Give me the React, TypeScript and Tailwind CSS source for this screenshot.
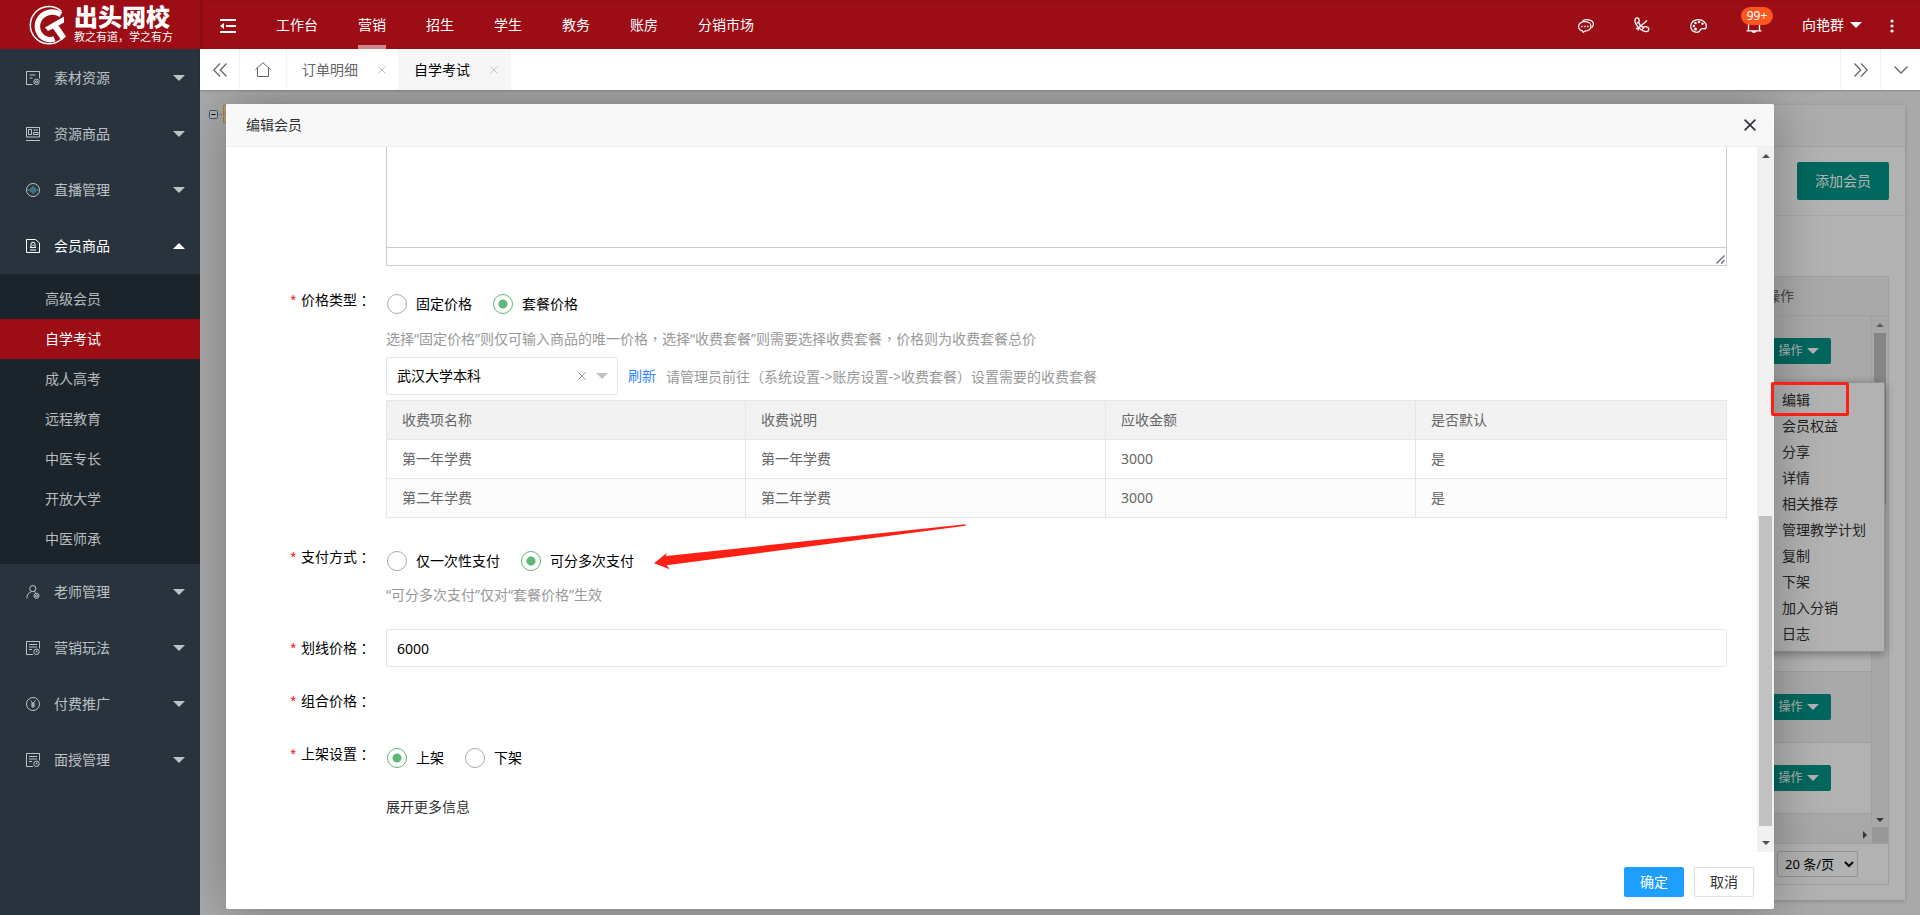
import type { ReactNode } from "react";

const SIDE_TOP = [
  { label: "素材资源", icon: "doc" },
  { label: "资源商品", icon: "goods" },
  { label: "直播管理", icon: "live" },
];
const SUB_ITEMS = ["高级会员", "自学考试", "成人高考", "远程教育", "中医专长", "开放大学", "中医师承"];
const SIDE_BOTTOM = [
  { label: "老师管理", icon: "teacher" },
  { label: "营销玩法", icon: "promo" },
  { label: "付费推广", icon: "yen" },
  { label: "面授管理", icon: "promo" },
];
const NAV = ["工作台", "营销", "招生", "学生", "教务", "账房", "分销市场"];
const MENU = ["编辑", "会员权益", "分享", "详情", "相关推荐", "管理教学计划", "复制", "下架", "加入分销", "日志"];
const ROWS = [true, false, false, false, false, true, true, false];
const FEES = [
  ["第一年学费", "第一年学费", "3000", "是"],
  ["第二年学费", "第二年学费", "3000", "是"],
];

function SideIcon({ name }: { name: string }) {
  return (
    <svg viewBox="0 0 14 14" className="size-[14px] shrink-0" fill="none" stroke="currentColor" strokeWidth="1">
      {name === "doc" && (
        <>
          <path d="M6.5 13.5H.5V.5h13v7M3.5 4h6M3.5 7h3" />
          <circle cx="10.5" cy="10.8" r="2.7" />
          <circle cx="10.5" cy="10.8" r="1" />
        </>
      )}
      {name === "goods" && <path d="M.5.5h13v9.5H.5zM0 13.5h14M2.5 2.5h3v5h-3zM7.5 3H12M7.5 5.5H12v2H7.5z" />}
      {name === "live" && (
        <>
          <circle cx="7" cy="7" r="6.5" />
          <path d="M3 6v2M5 4.5v5M7 3v8M9 4.5v5M11 6v2" stroke="#4fb3c4" />
        </>
      )}
      {name === "member" && (
        <path d="M.5.5h9l4 3.5v9.5H.5zM5 8.5V5.2a2 2 0 0 1 4 0v3.3M4 8.5h6M4 11h6M7 5.5v1.5" />
      )}
      {name === "teacher" && (
        <>
          <circle cx="6.8" cy="3.6" r="3.1" />
          <path d="M.8 13.5c0-3.6 1.7-5.8 4.4-6.6M8.3 6.5l1.4 1" />
          <circle cx="10.5" cy="10.8" r="2.5" />
          <circle cx="10.5" cy="10.8" r="1" />
        </>
      )}
      {name === "promo" && (
        <>
          <path d="M7 13.5H.5V.5h13v7M3 3.5h8M3 6h8M3 8.5h3" />
          <circle cx="10.5" cy="10.8" r="2.7" />
          <path d="M10.5 9.5v1.5h1" />
        </>
      )}
      {name === "yen" && (
        <>
          <circle cx="7" cy="7" r="6.5" />
          <path d="M4.5 3.5 7 6.5l2.5-3M7 6.5V11M4.8 7h4.4M4.8 9h4.4" />
        </>
      )}
    </svg>
  );
}

function Caret({ up = false, className = "" }: { up?: boolean; className?: string }) {
  return (
    <svg viewBox="0 0 12 6" className={`h-[6px] w-3 shrink-0 ${className}`} fill="currentColor">
      <path d={up ? "M0 6h12L6 0z" : "M0 0h12L6 6z"} />
    </svg>
  );
}

/* Full-width punctuation, drawn centred in its em box. */
function P({ children }: { children: ReactNode }) {
  return <span className="font-['Noto_Sans_CJK_TC',sans-serif]">{children}</span>;
}

function Sidebar() {
  const item = "flex h-14 items-center px-[26px] pr-[15px] text-white/70";
  return (
    <aside className="flex w-[200px] shrink-0 flex-col bg-[#28333e]">
      <div className="flex h-[49px] items-center bg-[#9c0d15] pl-7 text-white">
        <svg viewBox="0 0 40 40" className="size-10 shrink-0" fill="none" stroke="#fff">
          <path d="M33.5 6.2A18.7 18.7 0 1 0 33 34.5" strokeWidth="1.5" />
          <path d="M33 9.5C26 5.5 17.5 6.5 12.5 12.5 7 19.5 9 30 17 33.5c3.5 1.5 7 1.3 9.5.3" strokeWidth="5.5" />
          <path d="M17 22.500 36 11.500v6l-5.500 3L38 31.500l-4.500 4-8.500-12-5 2.500z" fill="#fff" stroke="none" />
        </svg>
        <div className="ml-[6px] font-['Liberation_Sans','Noto_Sans_CJK_SC',sans-serif]">
          <div className="text-2xl leading-[26px] font-black whitespace-nowrap">出头网校</div>
          <div className="text-[11px] leading-[13px] whitespace-nowrap">教之有道，学之有方</div>
        </div>
      </div>
      <nav className="pt-px">
        {SIDE_TOP.map((s) => (
          <a key={s.label} href="#" className={item}>
            <SideIcon name={s.icon} />
            <span className="ml-[14px] flex-1">{s.label}</span>
            <Caret />
          </a>
        ))}
        <a href="#" className="flex h-14 items-center px-[26px] pr-[15px] text-white">
          <SideIcon name="member" />
          <span className="ml-[14px] flex-1">会员商品</span>
          <Caret up />
        </a>
        <div className="rounded-xs bg-[#1c242b] py-[5px]">
          {SUB_ITEMS.map((s, i) => (
            <a
              key={s}
              href="#"
              className={`flex h-10 items-center pl-[45px] ${i === 1 ? "bg-[#9c0d15] text-white" : "text-white/70"}`}
            >
              {s}
            </a>
          ))}
        </div>
        {SIDE_BOTTOM.map((s) => (
          <a key={s.label} href="#" className={item}>
            <SideIcon name={s.icon} />
            <span className="ml-[14px] flex-1">{s.label}</span>
            <Caret />
          </a>
        ))}
      </nav>
    </aside>
  );
}

function TopBar() {
  return (
    <header className="flex h-[49px] shrink-0 items-center bg-[#9c0d15] text-white shadow-[inset_2px_0_2px_rgba(0,0,0,0.15)]">
      <button aria-label="菜单" className="ml-5">
        <svg viewBox="0 0 16 14" className="mt-[3px] h-[14px] w-4" stroke="#fff" fill="none" strokeWidth="2">
          <path d="M0 1h16M6 7h10M0 13h16" />
          <path d="M0 7l4-3v6z" fill="#fff" stroke="none" />
        </svg>
      </button>
      <nav className="ml-10 flex h-full gap-10">
        {NAV.map((n, i) => (
          <a
            key={n}
            href="#"
            className={`flex h-full items-center border-y-4 border-t-transparent ${i === 1 ? "border-b-white/50" : "border-b-transparent"}`}
          >
            {n}
          </a>
        ))}
      </nav>
      <div className="ml-auto flex h-full items-center">
        <button aria-label="消息" className="mr-10">
          <svg viewBox="0 0 16 14" className="mt-[3px] h-[14px] w-4" stroke="#fff" fill="none" strokeWidth="1.2">
            <path d="M6.8 2.7c3.5 0 6.2 2 6.2 4.7s-2.7 4.7-6.2 4.7l-1.5 1.3-1-1.5C2 11.1.6 9.5.6 7.4c0-2.7 2.7-4.7 6.2-4.7z" />
            <path d="M4.5 1.9C6 .8 8.5.3 11 .8c3 .6 4.6 2.6 4.3 4.9-.1 1.2-.8 2.2-1.8 3" />
            <path d="M3.3 7.500h1.400M6.200 7.500h1.400M9.100 7.500h1.400" strokeWidth="1.7" />
          </svg>
        </button>
        <button aria-label="电话" className="mr-10">
          <svg viewBox="0 0 16 16" className="size-4" stroke="#fff" fill="none" strokeWidth="1.3">
            <path d="M1 2.5C1.5.8 3.5.3 4.5 1.5c1 1.3 1 2.7 0 3.8.8 2.4 2.5 4.2 5 5.2 1.3-1.2 3.5-1 4.8.3.9 1 .6 2.6-.5 3.3-2 1-4.5.4-7.3-1.8C3.5 9.8.4 6 1 2.5z" />
            <path d="M13 3.5 4.5 11M2 11.5l2.5-.5-.5 2.5" />
            <path d="M4.5 5.3 2.5 6.5M9.5 10.5l-1.3 2" />
          </svg>
        </button>
        <button aria-label="主题" className="mr-[39px]">
          <svg viewBox="0 0 17 14" className="mt-[3px] h-[14px] w-[17px]" stroke="#fff" fill="none" strokeWidth="1.3">
            <path d="M8.5.7c4.5 0 7.8 3 7.8 6.5 0 1.8-.8 2.8-2 2.6-2-.4-3.5-.4-4 1-.5 1.6-1.6 2.5-3.3 2.5-3.5 0-6.3-2.4-6.3-6C.7 3.5 4 .7 8.5.7z" />
            <g fill="#fff" stroke="none">
              <circle cx="3.9" cy="7" r="1.2" />
              <circle cx="5.5" cy="4" r="1.2" />
              <circle cx="9" cy="3" r="1.2" />
              <circle cx="12.5" cy="4.8" r="1.2" />
              <circle cx="5.5" cy="10" r="1.5" />
            </g>
          </svg>
        </button>
        <button aria-label="通知" className="relative mr-10">
          <svg viewBox="0 0 16 16" className="mt-[3px] size-4" stroke="#fff" fill="none" strokeWidth="1.3">
            <path d="M.5 12.8h15M2.5 12.5V6.5a5.5 5.5 0 0 1 11 0v6M6 13.2c.3 1.6 3.7 1.6 4 0" />
          </svg>
          <span className="absolute -top-2 -left-[5px] h-[18px] w-8 rounded-full bg-[#ff5722] text-center text-xs leading-[18px]">
            99+
          </span>
        </button>
        <a href="#" className="mr-7 flex items-center gap-[6px]">
          向艳群
          <Caret />
        </a>
        <button aria-label="更多" className="mr-[26px]">
          <svg viewBox="0 0 4 14" className="mt-[3px] h-[14px] w-1" fill="#fff">
            <circle cx="2" cy="2" r="1.6" />
            <circle cx="2" cy="7" r="1.6" />
            <circle cx="2" cy="12" r="1.6" />
          </svg>
        </button>
      </div>
    </header>
  );
}

function Cross({ className }: { className: string }) {
  return (
    <svg viewBox="0 0 10 10" className={className} fill="none" stroke="currentColor">
      <path d="M.5.5l9 9M9.5.5l-9 9" />
    </svg>
  );
}

function TabBar() {
  const cell = "flex h-full items-center justify-center border-[#f2f2f2]";
  return (
    <div className="z-10 flex h-[41px] shrink-0 items-center bg-white text-[#666] shadow-[0_1px_2px_rgba(0,0,0,0.2)]">
      <button aria-label="向左" className={`${cell} w-10 border-r`}>
        <svg viewBox="0 0 14 14" className="size-[14px]" fill="none" stroke="currentColor" strokeWidth="1.3">
          <path d="M7 .5.8 7 7 13.5M13.5.5 7.3 7l6.2 6.5" />
        </svg>
      </button>
      <button aria-label="主页" className={`${cell} w-[47px] border-r`}>
        <svg viewBox="0 0 16 15" className="h-[15px] w-4" fill="none" stroke="currentColor" strokeWidth="1">
          <path d="M.5 7.5 8 .8l7.5 6.7M2.5 6v8.5h11V6" />
        </svg>
      </button>
      <div className="flex h-full items-center px-3 pl-[15px]">
        <a href="#">订单明细</a>
        <button aria-label="关闭订单明细" className="ml-5 text-[#b2b2b2]">
          <Cross className="size-2" />
        </button>
      </div>
      <div className="flex h-full items-center bg-[#f6f6f6] px-[13px] pl-4 text-black">
        <a href="#">自学考试</a>
        <button aria-label="关闭自学考试" className="ml-5 text-[#b2b2b2]">
          <Cross className="size-2" />
        </button>
      </div>
      <button aria-label="向右" className={`${cell} ml-auto w-10 border-l`}>
        <svg viewBox="0 0 14 14" className="size-[14px]" fill="none" stroke="currentColor" strokeWidth="1.3">
          <path d="M.5.5 6.7 7 .5 13.5M7 .5 13.2 7 7 13.5" />
        </svg>
      </button>
      <button aria-label="页签" className={`${cell} w-10 border-l`}>
        <svg viewBox="0 0 14 8" className="h-2 w-[14px]" fill="none" stroke="currentColor" strokeWidth="1.3">
          <path d="M.5.5 7 7 13.5.5" />
        </svg>
      </button>
    </div>
  );
}

function MemberList() {
  return (
    <div className="flex h-full">
      <div className="flex w-[60px] shrink-0 items-start pt-[15px] pl-[9px]">
        <svg viewBox="0 0 40 18" className="h-[18px] w-10">
          <rect x=".5" y="5.5" width="8" height="8" rx="1" fill="#fff" stroke="#5b7a99" />
          <path d="M2.5 9.5h4" stroke="#000" />
          <path d="M10 9.5h4" stroke="#888" strokeDasharray="1 1" />
          <rect x="14.5" y=".5" width="24" height="17" fill="#ffe6b0" stroke="#ffb951" />
          <circle cx="19" cy="9" r="2.5" fill="#3b8fc4" />
        </svg>
      </div>
      <section className="my-[15px] mr-[15px] flex min-w-0 flex-1 flex-col bg-white shadow-[0_1px_4px_rgba(0,0,0,0.2)]">
        <div className="h-[42px] shrink-0 border-b border-[#e6e6e6] bg-[#f8f8f8]" />
        <div className="flex h-[69px] shrink-0 items-center justify-end border-b border-[#eee] px-4">
          <button className="h-[38px] w-[92px] rounded-xs bg-[#009688] text-white">添加会员</button>
        </div>
        <div className="mx-4 mt-[60px] mb-[15px] flex min-h-0 flex-1 flex-col border border-[#e6e6e6]">
          <div className="flex h-[39px] shrink-0 items-center justify-end border-b border-[#e6e6e6] bg-[#f2f2f2]">
            <span className="w-[122px] text-[#666]">操作</span>
          </div>
          <div className="flex min-h-0 flex-1">
            <div className="min-w-0 flex-1 overflow-hidden border-r border-[#e6e6e6]">
              <table className="w-full table-fixed border-collapse">
                <tbody>
                  {ROWS.map((hasAction, i) => (
                    <tr key={i} className={`h-[71px] border-b border-[#e6e6e6] ${i % 2 || i === 0 ? "bg-[#f2f2f2]" : "bg-white"}`}>
                      <td className="p-0" />
                      <td className="w-[105px] p-0">
                        {hasAction && (
                          <button className="flex h-[26px] w-[65px] items-center justify-center gap-1 rounded-xs bg-[#009688] text-xs text-white">
                            操作
                            <Caret />
                          </button>
                        )}
                      </td>
                    </tr>
                  ))}
                </tbody>
              </table>
            </div>
            <div className="flex w-4 flex-col items-center bg-[#f1f1f1] py-[5px] text-[#505050]">
              <svg viewBox="0 0 8 4" className="mt-[2px] h-1 w-2" fill="#888">
                <path d="M0 4h8L4 0z" />
              </svg>
              <div className="mt-[6px] h-[172px] w-3 bg-[#c1c1c1]" />
              <svg viewBox="0 0 8 4" className="mt-auto h-1 w-2" fill="currentColor">
                <path d="M0 0h8L4 4z" />
              </svg>
            </div>
          </div>
          <div className="flex h-[17px] shrink-0 justify-end border-b border-[#e6e6e6] bg-[#f1f1f1]">
            <svg viewBox="0 0 4 8" className="mt-1 mr-[5px] h-2 w-1" fill="#505050">
              <path d="M0 0v8l4-4z" />
            </svg>
            <div className="w-4 bg-[#dcdcdc]" />
          </div>
          <div className="flex h-10 shrink-0 items-center justify-end pr-[30px]">
            <select aria-label="每页条数" className="h-[26px] w-[81px] rounded-xs border border-[#d2d2d2] bg-white pl-[3px] text-[13px] text-black">
              <option>20 条/页</option>
            </select>
          </div>
        </div>
      </section>
    </div>
  );
}

function Radio({ name, label, checked = false }: { name: string; label: string; checked?: boolean }) {
  return (
    <label className="mr-[21px] flex items-center gap-[9px]">
      <input
        type="radio"
        name={name}
        defaultChecked={checked}
        className="size-5 appearance-none rounded-full border border-[#aaa] checked:border-[#5fb878] checked:bg-[radial-gradient(circle,#5fb878_4px,transparent_5px)]"
      />
      {label}
    </label>
  );
}

function Field({ label, htmlFor, className = "", children }: { label: string; htmlFor?: string; className?: string; children?: ReactNode }) {
  return (
    <div className={`flex items-start text-black ${className}`}>
      <label htmlFor={htmlFor} className="flex h-[38px] w-[160px] shrink-0 items-center justify-end pr-[15px]">
        <span className="mr-[5px] font-['Liberation_Sans',sans-serif] text-[#f00]">*</span>
        {label}
        <P>：</P>
      </label>
      <div className="min-w-0 flex-1">{children}</div>
    </div>
  );
}

function EditDialog() {
  return (
    <div
      role="dialog"
      aria-label="编辑会员"
      className="absolute top-[14px] bottom-[6px] left-[26px] flex w-[90%] flex-col rounded-xs bg-white shadow-[1px_1px_50px_rgba(0,0,0,0.3)]"
    >
      <div className="flex h-[43px] shrink-0 items-center justify-between rounded-t-xs border-b border-[#eee] bg-[#f8f8f8] pr-[18px] pl-5 text-[#333]">
        <h2>编辑会员</h2>
        <button aria-label="关闭" className="text-[#2d2c3b]">
          <Cross className="size-3 stroke-[1.3]" />
        </button>
      </div>
      <div className="flex min-h-0 flex-1">
        <form className="min-w-0 flex-1 overflow-hidden pr-[30px]">
          <div className="mb-[15px] ml-[160px] flex h-[119px] flex-col border border-t-0 border-[#ccc]">
            <textarea aria-label="详情内容" className="min-h-0 w-full flex-1 resize-none outline-none" />
            <div className="flex h-[18px] shrink-0 items-end justify-end border-t border-[#ccc] p-px">
              <svg viewBox="0 0 9 9" className="size-[9px]" stroke="#667" strokeWidth="1.2">
                <path d="M.5 8.5l8-8M5 8.5 8.5 5" />
              </svg>
            </div>
          </div>

          <Field label="价格类型" className="mb-5">
            <div className="flex h-[46px] items-center pl-px">
              <Radio name="priceType" label="固定价格" />
              <Radio name="priceType" label="套餐价格" checked />
            </div>
            <p className="leading-[22px] text-[#999]">
              选择“固定价格”则仅可输入商品的唯一价格<P>，</P>选择“收费套餐”则需要选择收费套餐<P>，</P>价格则为收费套餐总价
            </p>
            <div className="mt-[7px] flex items-center">
              <div className="relative flex h-[38px] w-[232px] items-center">
                <select aria-label="收费套餐" className="size-full appearance-none rounded-xs border border-[#e6e6e6] bg-white pl-[10px] text-black">
                  <option>武汉大学本科</option>
                </select>
                <button type="button" aria-label="清除" className="absolute right-8 text-[#777]">
                  <Cross className="size-2" />
                </button>
                <Caret className="pointer-events-none absolute right-[10px] text-[#c2c2c2]" />
              </div>
              <a href="#" className="ml-[10px] text-[#3385ff]">刷新</a>
              <span className="ml-[10px] text-[#999]">
                请管理员前往<P>（</P>系统设置-&gt;账房设置-&gt;收费套餐<P>）</P>设置需要的收费套餐
              </span>
            </div>
            <table className="mt-[5px] w-full table-fixed border-collapse text-left text-[#666]">
              <colgroup>
                <col className="w-[26.8%]" />
                <col className="w-[26.85%]" />
                <col className="w-[23.15%]" />
                <col />
              </colgroup>
              <thead>
                <tr className="h-[39px] bg-[#f2f2f2]">
                  {["收费项名称", "收费说明", "应收金额", "是否默认"].map((h) => (
                    <th key={h} className="border border-[#e6e6e6] px-[15px] py-0 font-normal">{h}</th>
                  ))}
                </tr>
              </thead>
              <tbody>
                {FEES.map((r, i) => (
                  <tr key={i} className={`h-[39px] ${i % 2 ? "bg-[#fcfcfc]" : "bg-white"}`}>
                    {r.map((c, j) => (
                      <td key={j} className="border border-[#e6e6e6] px-[15px] py-0">{c}</td>
                    ))}
                  </tr>
                ))}
              </tbody>
            </table>
          </Field>

          <Field label="支付方式" className="mb-[23px]">
            <div className="relative flex h-[46px] items-center pl-px">
              <Radio name="payMode" label="仅一次性支付" />
              <Radio name="payMode" label="可分多次支付" checked />
              <svg viewBox="0 0 314 46" className="absolute -top-[14px] left-[267px] h-[46px] w-[314px]" fill="#ff2015">
                <path d="M1 39.3 13.7 29 13 32 312.5.3v1.4L13.7 41.3l3 4z" />
              </svg>
            </div>
            <p className="leading-[22px] text-[#999]">“可分多次支付”仅对“套餐价格”生效</p>
          </Field>

          <Field label="划线价格" htmlFor="linePrice" className="mb-[15px]">
            <input id="linePrice" defaultValue="6000" className="block h-[38px] w-full rounded-xs border border-[#e6e6e6] px-[10px] text-black outline-none" />
          </Field>
          <Field label="组合价格" className="mb-[15px]" />
          <Field label="上架设置" className="mb-[14px]">
            <div className="flex h-[46px] items-center pl-px">
              <Radio name="shelf" label="上架" checked />
              <Radio name="shelf" label="下架" />
            </div>
          </Field>
          <a href="#" className="ml-[160px] leading-6 text-[#333]">展开更多信息</a>
        </form>
        <div className="flex w-[17px] shrink-0 flex-col items-center bg-[#f1f1f1] py-[7px] text-[#505050]">
          <svg viewBox="0 0 8 4" className="h-1 w-2" fill="currentColor">
            <path d="M0 4h8L4 0z" />
          </svg>
          <div className="mt-auto mb-[15px] h-[310px] w-[13px] bg-[#c1c1c1]" />
          <svg viewBox="0 0 8 4" className="h-1 w-2" fill="currentColor">
            <path d="M0 0h8L4 4z" />
          </svg>
        </div>
      </div>
      <div className="flex h-[57px] shrink-0 items-start justify-end gap-[10px] pt-[15px] pr-5">
        <button className="h-[30px] w-[60px] rounded-xs bg-[#1e9fff] text-white">确定</button>
        <button className="h-[30px] w-[60px] rounded-xs border border-[#dedede] bg-white text-[#333]">取消</button>
      </div>
    </div>
  );
}

export default function App() {
  return (
    <div className="flex h-screen overflow-hidden font-['Noto_Sans','Noto_Sans_CJK_SC',sans-serif] text-sm leading-5">
      <Sidebar />
      <div className="flex min-w-0 flex-1 flex-col">
        <TopBar />
        <TabBar />
        <main className="relative min-h-0 flex-1 overflow-hidden bg-[#f2f2f2]">
          <MemberList />
          <ul className="absolute top-[292px] right-[35px] w-[118px] rounded-xs border border-[#d2d2d2] bg-white py-1 text-[#333] shadow-[0_2px_10px_rgba(0,0,0,0.35)]">
            {MENU.map((m) => (
              <li key={m}>
                <a href="#" className="block pl-[14px] leading-[26px] whitespace-nowrap">{m}</a>
              </li>
            ))}
          </ul>
          <div className="absolute inset-0 bg-black/30" />
          <EditDialog />
          <div className="pointer-events-none absolute top-[292px] right-[71px] h-[34px] w-[78px] rounded-xs border-3 border-[#ff2015]" />
        </main>
      </div>
    </div>
  );
}
